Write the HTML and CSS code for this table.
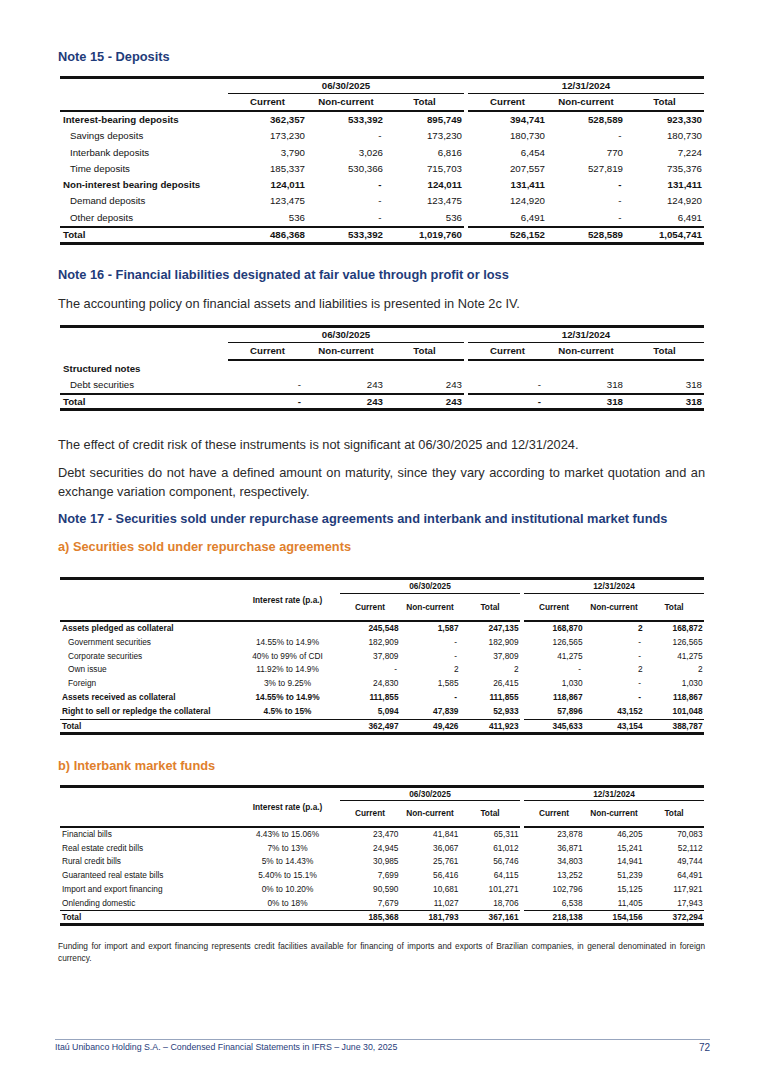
FILE: index.html
```html
<!DOCTYPE html>
<html lang="en">
<head>
<meta charset="utf-8">
<title>Notes 15-17</title>
<link rel="stylesheet" href="styles.css">
</head>
<body>
<div class="page">

  <h2 class="note">Note 15 - Deposits</h2>
  <table class="t big t1">
    <colgroup><col class="cl"><col class="cn"><col class="cm"><col class="cn"><col class="cg"><col class="cn"><col class="cm"><col class="cn"></colgroup>
    <thead>
      <tr class="h1"><th></th><th colspan="3" class="grp">06/30/2025</th><th class="gap"></th><th colspan="3" class="grp">12/31/2024</th></tr>
      <tr class="h2"><th class="ul"></th><th class="ul">Current</th><th class="ul">Non-current</th><th class="ul">Total</th><th class="gap"></th><th class="ul">Current</th><th class="ul">Non-current</th><th class="ul">Total</th></tr>
    </thead>
    <tbody>
      <tr class="b"><td class="lb">Interest-bearing deposits</td><td class="n">362,357</td><td class="n">533,392</td><td class="n">895,749</td><td class="gap"></td><td class="n">394,741</td><td class="n">528,589</td><td class="n">923,330</td></tr>
      <tr><td class="li">Savings deposits</td><td class="n">173,230</td><td class="n d">-</td><td class="n">173,230</td><td class="gap"></td><td class="n">180,730</td><td class="n d">-</td><td class="n">180,730</td></tr>
      <tr><td class="li">Interbank deposits</td><td class="n">3,790</td><td class="n">3,026</td><td class="n">6,816</td><td class="gap"></td><td class="n">6,454</td><td class="n">770</td><td class="n">7,224</td></tr>
      <tr><td class="li">Time deposits</td><td class="n">185,337</td><td class="n">530,366</td><td class="n">715,703</td><td class="gap"></td><td class="n">207,557</td><td class="n">527,819</td><td class="n">735,376</td></tr>
      <tr class="b"><td class="lb">Non-interest bearing deposits</td><td class="n">124,011</td><td class="n d">-</td><td class="n">124,011</td><td class="gap"></td><td class="n">131,411</td><td class="n d">-</td><td class="n">131,411</td></tr>
      <tr><td class="li">Demand deposits</td><td class="n">123,475</td><td class="n d">-</td><td class="n">123,475</td><td class="gap"></td><td class="n">124,920</td><td class="n d">-</td><td class="n">124,920</td></tr>
      <tr><td class="li">Other deposits</td><td class="n">536</td><td class="n d">-</td><td class="n">536</td><td class="gap"></td><td class="n">6,491</td><td class="n d">-</td><td class="n">6,491</td></tr>
    </tbody>
    <tfoot>
      <tr class="b tot"><td class="lb">Total</td><td class="n">486,368</td><td class="n">533,392</td><td class="n">1,019,760</td><td class="gap"></td><td class="n">526,152</td><td class="n">528,589</td><td class="n">1,054,741</td></tr>
    </tfoot>
  </table>

  <h2 class="note n16">Note 16 - Financial liabilities designated at fair value through profit or loss</h2>
  <p class="para p-pol">The accounting policy on financial assets and liabilities is presented in Note 2c IV.</p>
  <table class="t big t2">
    <colgroup><col class="cl"><col class="cn"><col class="cm"><col class="cn"><col class="cg"><col class="cn"><col class="cm"><col class="cn"></colgroup>
    <thead>
      <tr class="h1"><th></th><th colspan="3" class="grp">06/30/2025</th><th class="gap"></th><th colspan="3" class="grp">12/31/2024</th></tr>
      <tr class="h2"><th></th><th class="ul">Current</th><th class="ul">Non-current</th><th class="ul">Total</th><th class="gap"></th><th class="ul">Current</th><th class="ul">Non-current</th><th class="ul">Total</th></tr>
    </thead>
    <tbody>
      <tr class="b sn"><td class="lb">Structured notes</td><td></td><td></td><td></td><td class="gap"></td><td></td><td></td><td></td></tr>
      <tr><td class="li">Debt securities</td><td class="n dd">-</td><td class="n">243</td><td class="n">243</td><td class="gap"></td><td class="n dd">-</td><td class="n">318</td><td class="n">318</td></tr>
    </tbody>
    <tfoot>
      <tr class="b tot"><td class="lb">Total</td><td class="n dd">-</td><td class="n">243</td><td class="n">243</td><td class="gap"></td><td class="n dd">-</td><td class="n">318</td><td class="n">318</td></tr>
    </tfoot>
  </table>

  <p class="para p-eff">The effect of credit risk of these instruments is not significant at 06/30/2025 and 12/31/2024.</p>
  <p class="para p-debt">Debt securities do not have a defined amount on maturity, since they vary according to market quotation and an exchange variation component, respectively.</p>

  <h2 class="note n17">Note 17 - Securities sold under repurchase agreements and interbank and institutional market funds</h2>
  <h3 class="note sub sa">a) Securities sold under repurchase agreements</h3>

  <table class="t small t3">
    <colgroup><col class="sl"><col class="sr"><col class="sn"><col class="sn"><col class="sn"><col class="cg"><col class="sn"><col class="sn"><col class="sn"></colgroup>
    <thead>
      <tr class="h1"><th rowspan="2" class="ul"></th><th rowspan="2" class="ul rate">Interest rate (p.a.)</th><th colspan="3" class="grp">06/30/2025</th><th class="gap"></th><th colspan="3" class="grp">12/31/2024</th></tr>
      <tr class="h2"><th class="ul">Current</th><th class="ul">Non-current</th><th class="ul">Total</th><th class="gap"></th><th class="ul">Current</th><th class="ul">Non-current</th><th class="ul">Total</th></tr>
    </thead>
    <tbody>
      <tr class="b"><td class="lb">Assets pledged as collateral</td><td class="c"></td><td class="n">245,548</td><td class="n">1,587</td><td class="n">247,135</td><td class="gap"></td><td class="n">168,870</td><td class="n">2</td><td class="n">168,872</td></tr>
      <tr><td class="li">Government securities</td><td class="c">14.55% to 14.9%</td><td class="n">182,909</td><td class="n d">-</td><td class="n">182,909</td><td class="gap"></td><td class="n">126,565</td><td class="n d">-</td><td class="n">126,565</td></tr>
      <tr><td class="li">Corporate securities</td><td class="c">40% to 99% of CDI</td><td class="n">37,809</td><td class="n d">-</td><td class="n">37,809</td><td class="gap"></td><td class="n">41,275</td><td class="n d">-</td><td class="n">41,275</td></tr>
      <tr><td class="li">Own issue</td><td class="c">11.92% to 14.9%</td><td class="n d">-</td><td class="n">2</td><td class="n">2</td><td class="gap"></td><td class="n d">-</td><td class="n">2</td><td class="n">2</td></tr>
      <tr><td class="li">Foreign</td><td class="c">3% to 9.25%</td><td class="n">24,830</td><td class="n">1,585</td><td class="n">26,415</td><td class="gap"></td><td class="n">1,030</td><td class="n d">-</td><td class="n">1,030</td></tr>
      <tr class="b"><td class="lb">Assets received as collateral</td><td class="c">14.55% to 14.9%</td><td class="n">111,855</td><td class="n d">-</td><td class="n">111,855</td><td class="gap"></td><td class="n">118,867</td><td class="n d">-</td><td class="n">118,867</td></tr>
      <tr class="b"><td class="lb">Right to sell or repledge the collateral</td><td class="c">4.5% to 15%</td><td class="n">5,094</td><td class="n">47,839</td><td class="n">52,933</td><td class="gap"></td><td class="n">57,896</td><td class="n">43,152</td><td class="n">101,048</td></tr>
    </tbody>
    <tfoot>
      <tr class="b tot"><td class="lb">Total</td><td></td><td class="n">362,497</td><td class="n">49,426</td><td class="n">411,923</td><td class="gap"></td><td class="n">345,633</td><td class="n">43,154</td><td class="n">388,787</td></tr>
    </tfoot>
  </table>

  <h3 class="note sub sb">b) Interbank market funds</h3>

  <table class="t small t4">
    <colgroup><col class="sl"><col class="sr"><col class="sn"><col class="sn"><col class="sn"><col class="cg"><col class="sn"><col class="sn"><col class="sn"></colgroup>
    <thead>
      <tr class="h1"><th rowspan="2" class="ul"></th><th rowspan="2" class="ul rate">Interest rate (p.a.)</th><th colspan="3" class="grp">06/30/2025</th><th class="gap"></th><th colspan="3" class="grp">12/31/2024</th></tr>
      <tr class="h2"><th class="ul">Current</th><th class="ul">Non-current</th><th class="ul">Total</th><th class="gap"></th><th class="ul">Current</th><th class="ul">Non-current</th><th class="ul">Total</th></tr>
    </thead>
    <tbody>
      <tr><td class="lb">Financial bills</td><td class="c">4.43% to 15.06%</td><td class="n">23,470</td><td class="n">41,841</td><td class="n">65,311</td><td class="gap"></td><td class="n">23,878</td><td class="n">46,205</td><td class="n">70,083</td></tr>
      <tr><td class="lb">Real estate credit bills</td><td class="c">7% to 13%</td><td class="n">24,945</td><td class="n">36,067</td><td class="n">61,012</td><td class="gap"></td><td class="n">36,871</td><td class="n">15,241</td><td class="n">52,112</td></tr>
      <tr><td class="lb">Rural credit bills</td><td class="c">5% to 14.43%</td><td class="n">30,985</td><td class="n">25,761</td><td class="n">56,746</td><td class="gap"></td><td class="n">34,803</td><td class="n">14,941</td><td class="n">49,744</td></tr>
      <tr><td class="lb">Guaranteed real estate bills</td><td class="c">5.40% to 15.1%</td><td class="n">7,699</td><td class="n">56,416</td><td class="n">64,115</td><td class="gap"></td><td class="n">13,252</td><td class="n">51,239</td><td class="n">64,491</td></tr>
      <tr><td class="lb">Import and export financing</td><td class="c">0% to 10.20%</td><td class="n">90,590</td><td class="n">10,681</td><td class="n">101,271</td><td class="gap"></td><td class="n">102,796</td><td class="n">15,125</td><td class="n">117,921</td></tr>
      <tr><td class="lb">Onlending domestic</td><td class="c">0% to 18%</td><td class="n">7,679</td><td class="n">11,027</td><td class="n">18,706</td><td class="gap"></td><td class="n">6,538</td><td class="n">11,405</td><td class="n">17,943</td></tr>
    </tbody>
    <tfoot>
      <tr class="b tot"><td class="lb">Total</td><td></td><td class="n">185,368</td><td class="n">181,793</td><td class="n">367,161</td><td class="gap"></td><td class="n">218,138</td><td class="n">154,156</td><td class="n">372,294</td></tr>
    </tfoot>
  </table>

  <p class="fund">Funding for import and export financing represents credit facilities available for financing of imports and exports of Brazilian companies, in general denominated in foreign currency.</p>

  <footer class="foot">
    <span class="foot-t">Itaú Unibanco Holding S.A. – Condensed Financial Statements in IFRS – June 30, 2025</span>
    <span class="foot-p">72</span>
  </footer>
</div>
</body>
</html>
```
FILE: styles.css
```css
* { box-sizing: border-box; }
html, body { margin: 0; padding: 0; background: #fff; }
body { font-family: "Liberation Sans", Arial, sans-serif; color: #222; }

.page { width: 766px; padding: 49px 61px 0 58px; }

.note { margin: 0; font-size: 12.8px; line-height: 16px; font-weight: bold; color: #1f3c7a; }
.sub { color: #e0802c; }
.n16 { margin-top: 22px; }
.n17 { margin-top: 10.5px; }
.sa { margin-top: 12px; }
.sb { margin-top: 23.4px; }

.para { margin: 0; font-size: 12.8px; line-height: 19px; color: #2a2a2a; text-align: justify; }
.p-pol { margin-top: 10.5px; }
.p-eff { margin-top: 24px; }
.p-debt { margin-top: 9px; }

/* tables */
.t { border-collapse: separate; border-spacing: 0; table-layout: fixed; width: 644px; margin-left: 2px; color: #141414; }
.t th, .t td { padding: 0 2px; white-space: nowrap; vertical-align: middle; }
.t th { font-weight: bold; text-align: center; }
.t .n { text-align: right; }
.t .d { padding-right: 3.5px; }
.t .dd { padding-right: 6px; }
.t .c { text-align: center; }
.t .lb { text-align: left; padding-left: 3px; }
.t .li { text-align: left; padding-left: 10px; }
.t tr.b td { font-weight: bold; }

.t .cl { width: 168px; }
.t .cn { width: 79px; }
.t .cm { width: 78px; }
.t .cg { width: 4px; }
.t .sl { width: 175px; }
.t .sr { width: 105px; }
.t .sn { width: 60px; }

.t .h1 th { border-top: 3px solid #111; }
.t .h1 th.grp { border-bottom: 1px solid #111; }
.t th.ul { border-bottom: 2px solid #111; }
.t .tot td { border-top: 2px solid #111; border-bottom: 3px solid #111; }
.t .tot td.gap { border-top: 0; }

.big { font-size: 9.7px; }
.big .h1 th { line-height: 14px; }
.big .h2 th { line-height: 16px; }
.t1 tbody td { line-height: 16.3px; }
.t1 .tot td { line-height: 14px; }
.t1 { margin-top: 11px; }
.t2 { margin-top: 12.5px; }
.t2 .sn td { line-height: 15.5px; }
.t2 tbody tr + tr td { line-height: 16px; }
.t2 .tot td { line-height: 13px; }

.small { font-size: 8.3px; }
.small .h1 th.grp { line-height: 12.5px; }
.small .h2 th { line-height: 26.5px; }
.small .tot td { border-top-width: 1px; line-height: 12px; }
.t3 { margin-top: 22px; }
.t3 tbody td { line-height: 13.8px; }
.t4 { margin-top: 10.5px; }
.t4 tbody td { line-height: 13.7px; }
.t4 .h2 th { line-height: 25px; }
.t3 .lb, .t4 .lb { padding-left: 2px; }
.t3 .li { padding-left: 8px; }
.small .n { padding-right: 1.5px; }
.small .d { padding-right: 3px; }

.fund { margin: 14px 0 0; font-size: 8.3px; line-height: 12px; text-align: justify; color: #1e1e1e; }

.foot { margin: 75px 0 0 -3px; width: 655px; border-top: 1px solid #97a5be; padding-top: 2px; display: flex; justify-content: space-between; align-items: flex-start; color: #1f3c7a; }
.foot-t { font-size: 8.8px; line-height: 11px; }
.foot-p { font-size: 10px; line-height: 11px; }
```
